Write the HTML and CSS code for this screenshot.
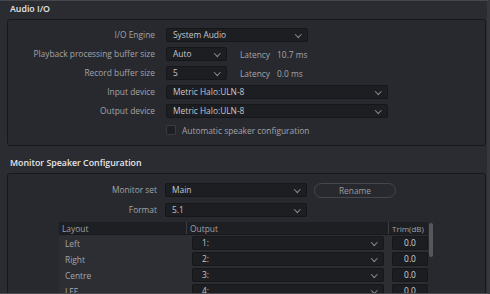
FILE: index.html
```html
<!DOCTYPE html>
<html>
<head>
<meta charset="utf-8">
<link rel="stylesheet" href="styles.css">
</head>
<body>
<div class="window">
  <div class="section-title first">Audio I/O</div>
  <div class="panel audio">
    <div class="label">I/O Engine</div>
    <div class="ctl"><div class="dd w142"><span>System Audio</span><i class="chev"></i></div></div>

    <div class="label">Playback processing buffer size</div>
    <div class="ctl"><div class="dd w61"><span>Auto</span><i class="chev"></i></div><span class="lat">Latency</span><span class="latv">10.7 ms</span></div>

    <div class="label">Record buffer size</div>
    <div class="ctl"><div class="dd w61"><span>5</span><i class="chev"></i></div><span class="lat">Latency</span><span class="latv">0.0 ms</span></div>

    <div class="label">Input device</div>
    <div class="ctl"><div class="dd w222"><span>Metric Halo:ULN-8</span><i class="chev"></i></div></div>

    <div class="label">Output device</div>
    <div class="ctl"><div class="dd w222"><span>Metric Halo:ULN-8</span><i class="chev"></i></div></div>

    <div class="label"></div>
    <div class="ctl"><div class="check"></div><span class="check-text">Automatic speaker configuration</span></div>
  </div>

  <div class="section-title second">Monitor Speaker Configuration</div>
  <div class="panel monitor">
    <div class="mgrid">
      <div class="label">Monitor set</div>
      <div class="ctl"><div class="dd w142"><span>Main</span><i class="chev"></i></div><div class="btn">Rename</div></div>
      <div class="label">Format</div>
      <div class="ctl"><div class="dd w142"><span>5.1</span><i class="chev"></i></div></div>
    </div>
    <div class="table-wrap">
      <div class="table">
        <div class="thead">
          <div class="th c1">Layout</div>
          <div class="th c2">Output</div>
          <div class="th c3">Trim(dB)</div>
        </div>
        <div class="tr">
          <div class="td c1">Left</div>
          <div class="td c2"><div class="dd out"><span>1:</span><i class="chev"></i></div></div>
          <div class="td c3"><div class="trim">0.0</div></div>
        </div>
        <div class="tr">
          <div class="td c1">Right</div>
          <div class="td c2"><div class="dd out"><span>2:</span><i class="chev"></i></div></div>
          <div class="td c3"><div class="trim">0.0</div></div>
        </div>
        <div class="tr">
          <div class="td c1">Centre</div>
          <div class="td c2"><div class="dd out"><span>3:</span><i class="chev"></i></div></div>
          <div class="td c3"><div class="trim">0.0</div></div>
        </div>
        <div class="tr">
          <div class="td c1">LFE</div>
          <div class="td c2"><div class="dd out"><span>4:</span><i class="chev"></i></div></div>
          <div class="td c3"><div class="trim">0.0</div></div>
        </div>
      </div>
      <div class="scroll"><div class="thumb"></div></div>
    </div>
  </div>
</div>
</body>
</html>
```
FILE: styles.css
```css
html, body {
  margin: 0;
  padding: 0;
}
body {
  width: 490px;
  height: 294px;
  overflow: hidden;
  background: #2b2c31;
  font-family: "Open Sans", "DejaVu Sans", sans-serif;
  font-size: 8.4px;
  color: #a3a4a8;
}
.window {
  height: 294px;
  box-sizing: border-box;
  border-top: 1px solid #46474c;
  border-right: 3px solid #37383d;
  border-bottom: 1px solid #4a4b50;
  overflow: hidden;
}
.section-title {
  color: #e6e6e8;
  font-weight: 600;
  font-size: 8.8px;
  padding-left: 10px;
}
.section-title.first {
  height: 18px;
  line-height: 17px;
}
.section-title.second {
  height: 27px;
  line-height: 14px;
  padding-top: 10px;
  box-sizing: border-box;
}
.panel {
  margin-left: 7px;
  width: 479px;
  box-sizing: border-box;
  border: 1px solid #17181b;
  border-radius: 3px;
  background: #28292e;
}
.audio {
  height: 127px;
  display: grid;
  grid-template-columns: 147px 1fr;
  column-gap: 11px;
  row-gap: 5px;
  grid-auto-rows: 14px;
  padding-top: 8px;
  align-content: start;
}
.label {
  text-align: right;
  line-height: 14px;
  white-space: nowrap;
}
.ctl {
  display: flex;
  align-items: center;
  height: 14px;
}
.dd {
  position: relative;
  height: 14px;
  box-sizing: border-box;
  background: #1d1e22;
  border: 1px solid #161719;
  border-radius: 2px;
  color: #c6c7ca;
  line-height: 12px;
  padding-left: 6px;
  flex: none;
}
.w142 { width: 142px; }
.w61 { width: 61px; }
.w222 { width: 222px; }
.chev {
  position: absolute;
  right: 7px;
  top: 3px;
  width: 3.5px;
  height: 3.5px;
  border-right: 1px solid #8d8e92;
  border-bottom: 1px solid #8d8e92;
  transform: rotate(45deg);
}
.lat {
  margin-left: 13px;
}
.latv {
  margin-left: 7px;
}
.check {
  width: 10px;
  height: 10px;
  box-sizing: border-box;
  background: #1e1f23;
  border: 1px solid #3b3c41;
  border-radius: 1px;
  flex: none;
}
.check-text {
  margin-left: 6px;
}
.monitor {
  height: 200px;
  padding-top: 9px;
}
.mgrid {
  display: grid;
  grid-template-columns: 149px 1fr;
  column-gap: 8px;
  row-gap: 6px;
  grid-auto-rows: 14px;
}
.btn {
  margin-left: 7px;
  width: 82px;
  height: 15px;
  box-sizing: border-box;
  border: 1px solid #46474c;
  border-radius: 8px;
  text-align: center;
  line-height: 13px;
  color: #9b9ca0;
}
.table-wrap {
  display: flex;
  margin-left: 51px;
  margin-top: 5px;
}
.table {
  width: 369px;
  background: #2d2e33;
}
.thead {
  display: flex;
  height: 13px;
  background: #1e1f23;
  border-bottom: 1px solid #18191c;
  box-sizing: border-box;
}
.th {
  line-height: 13px;
  padding-left: 3px;
  box-sizing: border-box;
  color: #9fa0a4;
}
.th + .th {
  border-left: 1px solid #3d3e43;
}
.c1 { width: 127px; }
.c2 { width: 202px; }
.c3 { width: 40px; }
.thead .c3 {
  font-size: 8px;
  padding-left: 3px;
}
.tr {
  display: flex;
  height: 16px;
  align-items: center;
}
.tr:first-of-type {
  margin-top: 1px;
}
.td.c1 {
  padding-left: 6px;
  box-sizing: border-box;
  color: #a6a7ab;
}
.td.c2 {
  padding-left: 6px;
  box-sizing: border-box;
}
.dd.out {
  width: 192px;
  padding-left: 9px;
}
.td.c3 {
  display: flex;
  justify-content: flex-end;
}
.trim {
  width: 36px;
  height: 14px;
  box-sizing: border-box;
  background: #1c1d21;
  border: 1px solid #161719;
  border-radius: 1px;
  color: #d2d3d6;
  text-align: center;
  line-height: 12px;
}
.scroll {
  width: 5px;
  margin-left: 1px;
}
.thumb {
  width: 4px;
  height: 34px;
  margin-top: 1px;
  background: #56575c;
  border-radius: 2px;
}
```
